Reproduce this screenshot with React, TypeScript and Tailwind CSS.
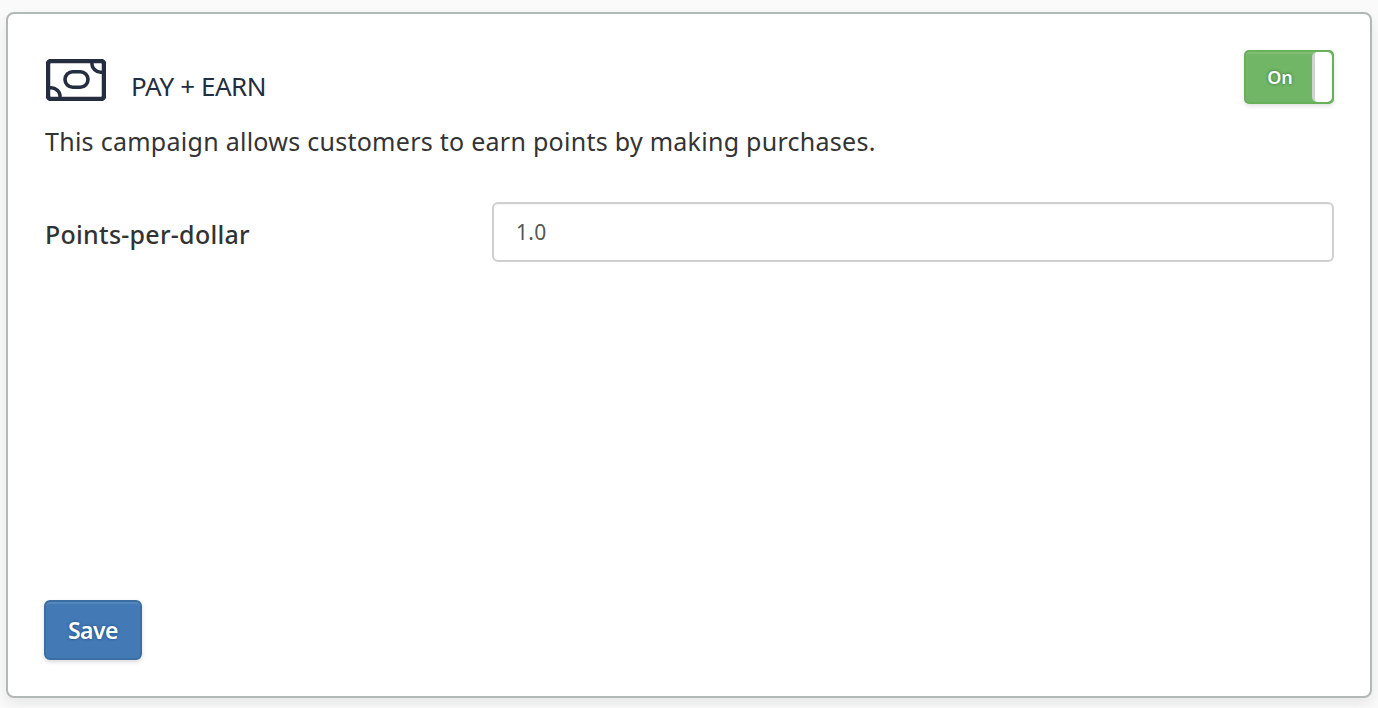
export default function App() {
  return (
    <div className="h-[708px] w-[1378px] overflow-hidden bg-[#fafafa] px-[6px] pt-3 font-['Noto_Sans','Liberation_Sans',sans-serif]">
      <div className="flex h-[686px] w-[1366px] flex-col rounded-[8px] border-2 border-[#b1b8b5] bg-white pl-[36px] pr-[36px] pt-[36px] pb-[36px] shadow-[0_6px_14px_rgba(0,0,0,0.08)]">
        <div className="flex items-start justify-between">
          <div className="ml-[2px] flex items-start pt-[9px]">
            <svg width="60" height="42" viewBox="0 0 60 42" fill="none" stroke="#252d40" strokeWidth="4.5" className="shrink-0">
              <rect x="2" y="2" width="56" height="38" rx="3" />
              <rect x="19" y="12.8" width="23" height="15.4" rx="7.7" strokeWidth="3.6" />
              <path d="M46 3a9 9 0 0 0 11 10" strokeWidth="3.5" />
              <path d="M3 29a9 9 0 0 1 11 10" strokeWidth="3.5" />
            </svg>
            <span className="ml-[25px] mt-[10px] text-[26px] leading-[34px] tracking-[-0.45px] text-[#252d40]">PAY + EARN</span>
          </div>
          <div className="relative flex h-[54px] w-[90px] items-center overflow-hidden rounded-[5px] border-2 border-[#68b059] bg-[#71b566] shadow-[0_2px_4px_rgba(0,0,0,0.12),inset_0_2px_1px_rgba(255,255,255,0.12)]">
            <span className="w-[68px] text-center text-[18px] font-semibold leading-none text-white [text-shadow:0_0_3px_rgba(0,60,0,0.6)]">On</span>
            <span className="absolute bottom-0 right-0 top-0 w-[20px] rounded-[5px] border-l-[3px] border-[#d2d2d2] bg-white" />
          </div>
        </div>
        <p className="ml-px mt-[19px] text-[25px] leading-[36px] tracking-[0.27px] text-[#333333]">This campaign allows customers to earn points by making purchases.</p>
        <div className="mt-[43px] flex items-start">
          <label className="ml-px w-[447px] pt-[15px] text-[25px] font-medium leading-[34px] tracking-[0.27px] text-[#333333]">Points-per-dollar</label>
          <input readOnly value="1.0" className="h-[60px] flex-1 rounded-[6px] border-2 border-[#cfcfcf] bg-white px-[22px] text-[21px] tracking-[0.3px] text-[#555555] shadow-[inset_0_1px_1px_rgba(0,0,0,0.04)] outline-none" />
        </div>
        <div className="mt-auto">
          <button className="h-[60px] w-[98px] rounded-[6px] border-2 border-[#3b6ea3] bg-[#437ab5] text-[23px] font-semibold tracking-[-0.5px] text-white shadow-[0_2px_4px_rgba(0,0,0,0.15),inset_0_2px_1px_rgba(255,255,255,0.1)] [text-shadow:0_0_3px_rgba(0,30,80,0.6)]">Save</button>
        </div>
      </div>
    </div>
  );
}
